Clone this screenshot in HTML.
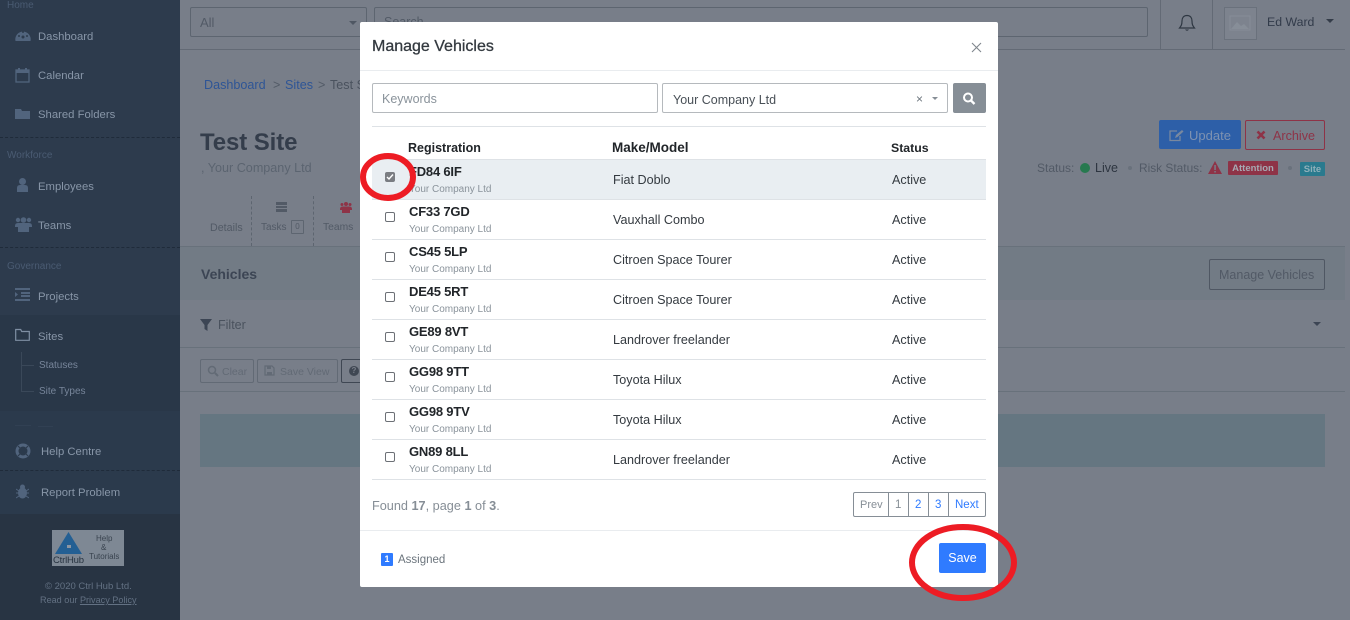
<!DOCTYPE html>
<html><head><meta charset="utf-8"><style>
html,body{margin:0;padding:0}
body{width:1350px;height:620px;overflow:hidden;position:relative;background:#787e89;font-family:"Liberation Sans",sans-serif;font-size:13px}
div,span.t,svg{position:absolute}
.t{position:absolute;white-space:nowrap;line-height:20px;height:20px}
.s{color:#8896a8;font-size:11.3px}
.h{color:#4a5b72;font-size:10px}
.r{color:#212529;font-weight:bold;font-size:13px;letter-spacing:-.2px}
.c{color:#8a939b;font-size:10px}
.m{color:#343a40;font-size:12.6px}
.cb{left:385px;width:8px;height:8px;border:1px solid #6c7076;border-radius:2px;background:#fff}
.rl{left:372px;width:614px;height:1px;background:#dee2e6}
</style></head><body>
<!-- sidebar -->
<div style="left:0;top:0;width:180px;height:620px;background:#2d3b4d"></div>
<div style="left:0;top:315px;width:180px;height:96px;background:#293748"></div>
<div style="left:0;top:411px;width:180px;height:103px;background:#2b3a4c"></div>
<div style="left:0;top:514px;width:180px;height:106px;background:#283443"></div>
<div style="left:15px;top:425px;width:16px;height:1px;background:#314053"></div>
<div style="left:38px;top:426px;width:15px;height:1px;background:#314053"></div>
<div style="left:0;top:137px;width:180px;border-top:1px dashed #1f2b3a"></div>
<div style="left:0;top:247px;width:180px;border-top:1px dashed #1f2b3a"></div>
<div style="left:0;top:470px;width:180px;border-top:1px dashed #1f2b3a"></div>
<span class="t h" style="left:7px;top:-4px">Home</span>
<span class="t h" style="left:7px;top:146px">Workforce</span>
<span class="t h" style="left:7px;top:257px">Governance</span>
<span class="t s" style="left:38px;top:27px">Dashboard</span>
<span class="t s" style="left:38px;top:66px">Calendar</span>
<span class="t s" style="left:38px;top:105px">Shared Folders</span>
<span class="t s" style="left:38px;top:177px">Employees</span>
<span class="t s" style="left:38px;top:216px">Teams</span>
<span class="t s" style="left:38px;top:287px">Projects</span>
<span class="t s" style="left:38px;top:327px">Sites</span>
<span class="t" style="left:39px;top:356px;font-size:10px;color:#77859a">Statuses</span>
<span class="t" style="left:39px;top:382px;font-size:10px;color:#77859a">Site Types</span>
<span class="t s" style="left:41px;top:442px">Help Centre</span>
<span class="t s" style="left:41px;top:483px">Report Problem</span>
<div style="left:21px;top:352px;width:1px;height:40px;background:#3a4859"></div>
<div style="left:21px;top:365px;width:13px;height:1px;background:#3a4859"></div>
<div style="left:21px;top:391px;width:13px;height:1px;background:#3a4859"></div>
<svg style="left:15px;top:27px" width="16" height="16" viewBox="0 0 16 16"><path d="M.5 14A7.700 7.700 0 1 1 15.500 14z" fill="#51647d"/><circle cx="8" cy="10" r="1.500" fill="#2d3b4d"/><circle cx="4" cy="9" r="1" fill="#2d3b4d"/><circle cx="12" cy="9" r="1" fill="#2d3b4d"/><circle cx="8" cy="5" r="1" fill="#2d3b4d"/></svg>
<svg style="left:15px;top:67px" width="15" height="16" viewBox="0 0 15 16"><rect x="1" y="3" width="13" height="12" fill="none" stroke="#51647d" stroke-width="1.300"/><rect x="1" y="3" width="13" height="3" fill="#51647d"/><rect x="3" y="1" width="2" height="3" fill="#51647d"/><rect x="10" y="1" width="2" height="3" fill="#51647d"/></svg>
<svg style="left:15px;top:107px" width="15" height="13" viewBox="0 0 15 13"><path d="M0 2h6l1 2h8v8H0z" fill="#51647d"/></svg>
<svg style="left:16px;top:178px" width="13" height="14" viewBox="0 0 13 14"><circle cx="6.500" cy="3.500" r="3.500" fill="#51647d"/><path d="M1 14V10q0-3 3-3h5q3 0 3 3v4z" fill="#51647d"/></svg>
<svg style="left:15px;top:217px" width="17" height="15" viewBox="0 0 17 15"><circle cx="8.500" cy="3" r="2.800" fill="#51647d"/><circle cx="3" cy="3" r="2.200" fill="#51647d"/><circle cx="14" cy="3" r="2.200" fill="#51647d"/><path d="M0 9q0-3 3-3h11q3 0 3 3v1h-3v5H3v-5H0z" fill="#51647d"/></svg>
<svg style="left:15px;top:288px" width="16" height="13" viewBox="0 0 16 13"><path d="M0 0h15v2H0zM6 4h9v2H6zM6 7h9v2H6zM0 11h15v2H0zM0 4l3 2.500L0 9z" fill="#51647d"/></svg>
<svg style="left:15px;top:328px" width="15" height="13" viewBox="0 0 15 13"><path d="M.7 1.500h5l1 2h7.600v8.800H.7z" fill="none" stroke="#7f8fa3" stroke-width="1.200"/></svg>
<svg style="left:15px;top:443px" width="16" height="16" viewBox="0 0 16 16"><circle cx="8" cy="8" r="6" fill="none" stroke="#51647d" stroke-width="3"/><path d="M3 3l3 3M13 3l-3 3M3 13l3-3M13 13l-3-3" stroke="#2d3b4d" stroke-width="1.200"/></svg>
<svg style="left:16px;top:484px" width="13" height="15" viewBox="0 0 13 15"><ellipse cx="6.500" cy="9" rx="4.500" ry="5.500" fill="#51647d"/><circle cx="6.500" cy="3" r="2.500" fill="#51647d"/><path d="M0 5l3 2M13 5l-3 2M0 9h3M13 9h-3M0 14l3-2M13 14l-3-2" stroke="#51647d" stroke-width="1"/></svg>
<!-- logo -->
<div style="left:52px;top:530px;width:72px;height:36px;background:#7e8894"></div>
<svg style="left:55px;top:532px" width="28" height="22" viewBox="0 0 28 22"><path d="M13.500 0L27 22H0z" fill="#235f93"/><rect x="12" y="13" width="4" height="3" fill="#8d96a2"/></svg>
<span class="t" style="left:53px;top:551px;font-size:9.500px;letter-spacing:-.2px;color:#273340">CtrlHub</span>
<span class="t" style="left:96px;top:534px;font-size:8px;line-height:10px;height:10px;color:#39434f">Help</span>
<span class="t" style="left:101px;top:543px;font-size:8px;line-height:10px;height:10px;color:#39434f">&amp;</span>
<span class="t" style="left:89px;top:552px;font-size:8px;line-height:10px;height:10px;color:#39434f">Tutorials</span>
<span class="t" style="left:45px;top:577px;font-size:9.500px;color:#637183">© 2020 Ctrl Hub Ltd.</span>
<span class="t" style="left:40px;top:590px;font-size:9.100px;color:#637183">Read our <u>Privacy Policy</u></span>
<!-- topbar -->
<div style="left:180px;top:49px;width:1165px;height:1px;background:#636a75"></div>
<div style="left:190px;top:7px;width:175px;height:28px;border:1px solid #5d6570;border-radius:2px"></div>
<span class="t" style="left:200px;top:13px;color:#525a66;font-size:13px">All</span>
<div style="left:349px;top:21px;width:0;height:0;border:4px solid transparent;border-top-color:#4f5763"></div>
<div style="left:374px;top:7px;width:772px;height:28px;border:1px solid #5d6570;border-radius:2px"></div>
<span class="t" style="left:384px;top:12px;color:#525a66;font-size:12.500px">Search</span>
<div style="left:1160px;top:0;width:1px;height:49px;background:#636a75"></div>
<div style="left:1212px;top:0;width:1px;height:49px;background:#636a75"></div>
<svg style="left:1178px;top:14px" width="18" height="19" viewBox="0 0 18 19"><path d="M9 1.500c-3.500 0-5 2.500-5 5.500 0 4-1 5-2.500 7h15c-1.500-2-2.500-3-2.500-7 0-3-1.500-5.500-5-5.500z" fill="none" stroke="#2e3742" stroke-width="1.200"/><path d="M7 15.500q2 2.500 4 0z" fill="#2e3742"/></svg>
<div style="left:1224px;top:7px;width:31px;height:31px;border:1px solid #6a717c;background:#7d838e"></div>
<svg style="left:1229px;top:15px" width="22" height="16" viewBox="0 0 22 16"><rect x="1" y="1" width="20" height="14" fill="none" stroke="#878e98"/><path d="M2 14l6-7 4 4 3-2 5 5z" fill="#878e98"/></svg>
<span class="t" style="left:1267px;top:12px;color:#323b4a;font-size:12.300px">Ed Ward</span>
<div style="left:1326px;top:19px;width:0;height:0;border:4px solid transparent;border-top-color:#343c49"></div>
<!-- page -->
<span class="t" style="left:204px;top:75px;font-size:12.600px;color:#2e5596">Dashboard</span>
<span class="t" style="left:273px;top:75px;font-size:12.600px;color:#525a66">&gt;</span>
<span class="t" style="left:285px;top:75px;font-size:12.600px;color:#2e5596">Sites</span>
<span class="t" style="left:318px;top:75px;font-size:12.600px;color:#525a66">&gt;</span>
<span class="t" style="left:330px;top:75px;font-size:12.600px;color:#4a525e">Test Site</span>
<span class="t" style="left:200px;top:133px;font-size:24px;font-weight:bold;letter-spacing:-.1px;color:#343d4b">Test Site</span>
<span class="t" style="left:201px;top:158px;font-size:12.600px;color:#5b6470">, Your Company Ltd</span>
<span class="t" style="left:210px;top:218px;font-size:10.700px;color:#525a66">Details</span>
<span class="t" style="left:261px;top:218px;font-size:10px;color:#525a66">Tasks</span>
<div style="left:291px;top:220px;width:11px;height:12px;border:1px solid #5d6570;border-radius:1px;font-size:8px;line-height:12px;text-align:center;color:#525a66">0</div>
<span class="t" style="left:323px;top:218px;font-size:10.300px;color:#525a66">Teams</span>
<div style="left:251px;top:196px;width:1px;height:50px;border-left:1px dashed #5d6570"></div>
<div style="left:313px;top:196px;width:1px;height:50px;border-left:1px dashed #5d6570"></div>
<svg style="left:276px;top:202px" width="11" height="10" viewBox="0 0 11 10"><path d="M0 0h11v3H0zM0 4h11v2H0zM0 7h11v3H0z" fill="#525a66"/></svg>
<svg style="left:340px;top:202px" width="12" height="11" viewBox="0 0 12 11"><circle cx="6" cy="2" r="2" fill="#8e3347"/><circle cx="2" cy="2.500" r="1.500" fill="#8e3347"/><circle cx="10" cy="2.500" r="1.500" fill="#8e3347"/><path d="M0 7q0-2.500 3-2.500h6q3 0 3 2.500v1h-2v3H2V8H0z" fill="#8e3347"/></svg>
<!-- status right -->
<div style="left:1159px;top:120px;width:82px;height:29px;background:#2d5fa8;border-radius:2px"></div>
<svg style="left:1169px;top:129px" width="15" height="13" viewBox="0 0 15 13"><path d="M11 7v4.500H1V2h7" fill="none" stroke="#79889f" stroke-width="1.300"/><path d="M6 9l1-3 6-5 1.500 1.500-6 5.500z" fill="#79889f"/></svg>
<span class="t" style="left:1189px;top:126px;font-size:13px;color:#7e92b1">Update</span>
<div style="left:1245px;top:120px;width:78px;height:28px;border:1px solid #8e3347;border-radius:2px"></div>
<svg style="left:1256px;top:130px" width="10" height="10" viewBox="0 0 10 10"><path d="M1.500 1.500l7 7M8.500 1.500l-7 7" stroke="#8e3347" stroke-width="2.600"/></svg>
<span class="t" style="left:1273px;top:126px;font-size:12.600px;color:#8e3347">Archive</span>
<span class="t" style="left:1037px;top:158px;font-size:12px;color:#525a66">Status:</span>
<div style="left:1080px;top:163px;width:10px;height:10px;border-radius:50%;background:#27794f"></div>
<span class="t" style="left:1095px;top:158px;font-size:12.500px;color:#2d3540">Live</span>
<div style="left:1128px;top:166px;width:4px;height:4px;border-radius:50%;background:#69717c"></div>
<span class="t" style="left:1139px;top:158px;font-size:11.900px;color:#525a66">Risk Status:</span>
<svg style="left:1208px;top:161px" width="14" height="13" viewBox="0 0 14 13"><path d="M7 0l7 13H0z" fill="#8e3347"/><rect x="6.300" y="4" width="1.500" height="5" fill="#787e89"/><rect x="6.300" y="10" width="1.500" height="1.500" fill="#787e89"/></svg>
<div style="left:1228px;top:161px;width:50px;height:14px;background:#8e3347;border-radius:1px;color:#a6a9b3;font-size:9.500px;font-weight:bold;line-height:15px;text-align:center">Attention</div>
<div style="left:1288px;top:166px;width:4px;height:4px;border-radius:50%;background:#69717c"></div>
<div style="left:1300px;top:162px;width:25px;height:14px;background:#2a7a8e;border-radius:1px;color:#8fb0ba;font-size:9.500px;font-weight:bold;line-height:15px;text-align:center">Site</div>
<!-- vehicles band -->
<div style="left:180px;top:246px;width:1165px;height:54px;background:#727b85;border-top:1px solid #68717b;box-sizing:border-box"></div>
<span class="t" style="left:201px;top:264px;font-size:14px;font-weight:bold;color:#3c4554">Vehicles</span>
<div style="left:1209px;top:259px;width:114px;height:29px;border:1px solid #4f5763;border-radius:2px"></div>
<span class="t" style="left:1219px;top:265px;font-size:12.500px;color:#525a66">Manage Vehicles</span>
<svg style="left:200px;top:319px" width="12" height="12" viewBox="0 0 12 12"><path d="M0 0h12L7.500 6v6l-3-2V6z" fill="#3c4554"/></svg>
<span class="t" style="left:218px;top:315px;font-size:12.500px;color:#4a525e">Filter</span>
<div style="left:1313px;top:322px;width:0;height:0;border:4.500px solid transparent;border-top-color:#3c4554"></div>
<div style="left:180px;top:347px;width:1165px;height:1px;background:#68717b"></div>
<div style="left:180px;top:391px;width:1165px;height:1px;background:#68717b"></div>
<div style="left:200px;top:359px;width:52px;height:22px;border:1px solid #626a75;border-radius:2px"></div>
<span class="t" style="left:222px;top:362px;font-size:10.500px;color:#626a75">Clear</span>
<svg style="left:207px;top:365px" width="12" height="12" viewBox="0 0 12 12"><circle cx="5" cy="5" r="3.500" fill="none" stroke="#626a75" stroke-width="1.500"/><path d="M8 8l3 3" stroke="#626a75" stroke-width="2"/></svg>
<div style="left:257px;top:359px;width:79px;height:22px;border:1px solid #626a75;border-radius:2px"></div>
<span class="t" style="left:280px;top:362px;font-size:10.500px;color:#626a75">Save View</span>
<svg style="left:264px;top:365px" width="11" height="11" viewBox="0 0 11 11"><path d="M1 1h7l2 2v7H1z" fill="none" stroke="#626a75" stroke-width="1.200"/><rect x="3" y="1" width="4" height="3" fill="#626a75"/><rect x="3" y="7" width="5" height="3" fill="#626a75"/></svg>
<div style="left:341px;top:359px;width:30px;height:22px;border:1px solid #3f4753;border-radius:2px"></div>
<div style="left:349px;top:366px;width:10px;height:10px;border-radius:50%;background:#3f4753;color:#787e89;font-size:8px;font-weight:bold;line-height:10px;text-align:center">?</div>
<div style="left:200px;top:414px;width:1125px;height:53px;background:#657681"></div>
<!-- modal -->
<div style="left:360px;top:22px;width:638px;height:565px;background:#fff;border-radius:2px"></div>
<span class="t" style="left:372px;top:37px;font-size:16px;color:#343a40;-webkit-text-stroke:.3px #343a40">Manage Vehicles</span>
<svg style="left:971px;top:42px" width="11" height="11" viewBox="0 0 11 11"><path d="M1 1l9 9M10 1l-9 9" stroke="#7f868d" stroke-width="1.100"/></svg>
<div style="left:360px;top:70px;width:638px;height:1px;background:#e9ecef"></div>
<div style="left:372px;top:83px;width:284px;height:28px;border:1px solid #b5b9bd;border-radius:2px"></div>
<span class="t" style="left:382px;top:89px;font-size:12.500px;color:#8a939b">Keywords</span>
<div style="left:662px;top:83px;width:284px;height:28px;border:1px solid #b5b9bd;border-radius:2px"></div>
<span class="t" style="left:673px;top:90px;font-size:12.500px;color:#495057">Your Company Ltd</span>
<span class="t" style="left:916px;top:89px;font-size:12px;color:#6c757d">×</span>
<div style="left:932px;top:97px;width:0;height:0;border:3.500px solid transparent;border-top-color:#868e96"></div>
<div style="left:953px;top:83px;width:33px;height:30px;background:#868e96;border-radius:2px"></div>
<svg style="left:962px;top:92px" width="14" height="13" viewBox="0 0 14 13"><circle cx="6" cy="5.500" r="4" fill="none" stroke="#fff" stroke-width="2"/><path d="M9 8.500l3.500 3.500" stroke="#fff" stroke-width="2.300"/></svg>
<div class="rl" style="top:126px"></div>
<span class="t" style="left:408px;top:138px;font-size:12.500px;font-weight:bold;color:#212529">Registration</span>
<span class="t" style="left:612px;top:138px;font-size:13.500px;font-weight:bold;color:#212529">Make/Model</span>
<span class="t" style="left:891px;top:138px;font-size:12.300px;font-weight:bold;color:#212529">Status</span>
<div style="left:372px;top:160px;width:614px;height:39px;background:#e9eef2"></div>
<div class="rl" style="top:159px"></div><div class="rl" style="top:199px"></div><div class="rl" style="top:239px"></div><div class="rl" style="top:279px"></div><div class="rl" style="top:319px"></div><div class="rl" style="top:359px"></div><div class="rl" style="top:399px"></div><div class="rl" style="top:439px"></div><div class="rl" style="top:479px"></div>
<span class="t r" style="left:409px;top:162px">FD84 6IF</span><span class="t c" style="left:409px;top:180px">Your Company Ltd</span><span class="t m" style="left:613px;top:170px">Fiat Doblo</span><span class="t m" style="left:892px;top:170px">Active</span>
<span class="t r" style="left:409px;top:202px">CF33 7GD</span><span class="t c" style="left:409px;top:220px">Your Company Ltd</span><span class="t m" style="left:613px;top:210px">Vauxhall Combo</span><span class="t m" style="left:892px;top:210px">Active</span>
<span class="t r" style="left:409px;top:242px">CS45 5LP</span><span class="t c" style="left:409px;top:260px">Your Company Ltd</span><span class="t m" style="left:613px;top:250px">Citroen Space Tourer</span><span class="t m" style="left:892px;top:250px">Active</span>
<span class="t r" style="left:409px;top:282px">DE45 5RT</span><span class="t c" style="left:409px;top:300px">Your Company Ltd</span><span class="t m" style="left:613px;top:290px">Citroen Space Tourer</span><span class="t m" style="left:892px;top:290px">Active</span>
<span class="t r" style="left:409px;top:322px">GE89 8VT</span><span class="t c" style="left:409px;top:340px">Your Company Ltd</span><span class="t m" style="left:613px;top:330px">Landrover freelander</span><span class="t m" style="left:892px;top:330px">Active</span>
<span class="t r" style="left:409px;top:362px">GG98 9TT</span><span class="t c" style="left:409px;top:380px">Your Company Ltd</span><span class="t m" style="left:613px;top:370px">Toyota Hilux</span><span class="t m" style="left:892px;top:370px">Active</span>
<span class="t r" style="left:409px;top:402px">GG98 9TV</span><span class="t c" style="left:409px;top:420px">Your Company Ltd</span><span class="t m" style="left:613px;top:410px">Toyota Hilux</span><span class="t m" style="left:892px;top:410px">Active</span>
<span class="t r" style="left:409px;top:442px">GN89 8LL</span><span class="t c" style="left:409px;top:460px">Your Company Ltd</span><span class="t m" style="left:613px;top:450px">Landrover freelander</span><span class="t m" style="left:892px;top:450px">Active</span>
<div class="cb" style="top:172px;background:#7a7d82;border-color:#7a7d82"></div>
<svg style="left:386px;top:173px" width="8" height="8" viewBox="0 0 8 8"><path d="M1 4l2 2 4-4.500" fill="none" stroke="#fff" stroke-width="1.400"/></svg>
<div class="cb" style="top:212px"></div><div class="cb" style="top:252px"></div><div class="cb" style="top:292px"></div><div class="cb" style="top:332px"></div><div class="cb" style="top:372px"></div><div class="cb" style="top:412px"></div><div class="cb" style="top:452px"></div>
<span class="t" style="left:372px;top:496px;font-size:12.700px;color:#868e96">Found <b>17</b>, page <b>1</b> of <b>3</b>.</span>
<div style="left:853px;top:492px;width:131px;height:23px;border:1px solid #868e96;border-radius:2px"></div>
<div style="left:888px;top:492px;width:1px;height:25px;background:#868e96"></div>
<div style="left:908px;top:492px;width:1px;height:25px;background:#868e96"></div>
<div style="left:928px;top:492px;width:1px;height:25px;background:#868e96"></div>
<div style="left:948px;top:492px;width:1px;height:25px;background:#868e96"></div>
<span class="t" style="left:860px;top:495px;font-size:11px;color:#868e96">Prev</span>
<span class="t" style="left:895px;top:495px;font-size:11.500px;color:#868e96">1</span>
<span class="t" style="left:915px;top:495px;font-size:11.500px;color:#2f7bff">2</span>
<span class="t" style="left:935px;top:495px;font-size:11.500px;color:#2f7bff">3</span>
<span class="t" style="left:955px;top:495px;font-size:11.500px;color:#2f7bff">Next</span>
<div style="left:360px;top:530px;width:638px;height:1px;background:#e9ecef"></div>
<div style="left:381px;top:553px;width:12px;height:13px;background:#2f7bff;border-radius:1px;color:#fff;font-size:9px;font-weight:bold;line-height:13px;text-align:center">1</div>
<span class="t" style="left:398px;top:550px;font-size:11.500px;color:#6c757d">Assigned</span>
<div style="left:939px;top:543px;width:47px;height:30px;background:#2f7bff;border-radius:2px;color:#fff;font-size:12.500px;line-height:31px;text-align:center">Save</div>
<!-- annotations -->
<svg style="left:0;top:0" width="1350" height="620" viewBox="0 0 1350 620"><ellipse cx="388" cy="177" rx="25" ry="21" fill="none" stroke="#ed1c24" stroke-width="6"/><ellipse cx="963" cy="562.500" rx="51" ry="35.500" fill="none" stroke="#ed1c24" stroke-width="6"/></svg>
</body></html>
